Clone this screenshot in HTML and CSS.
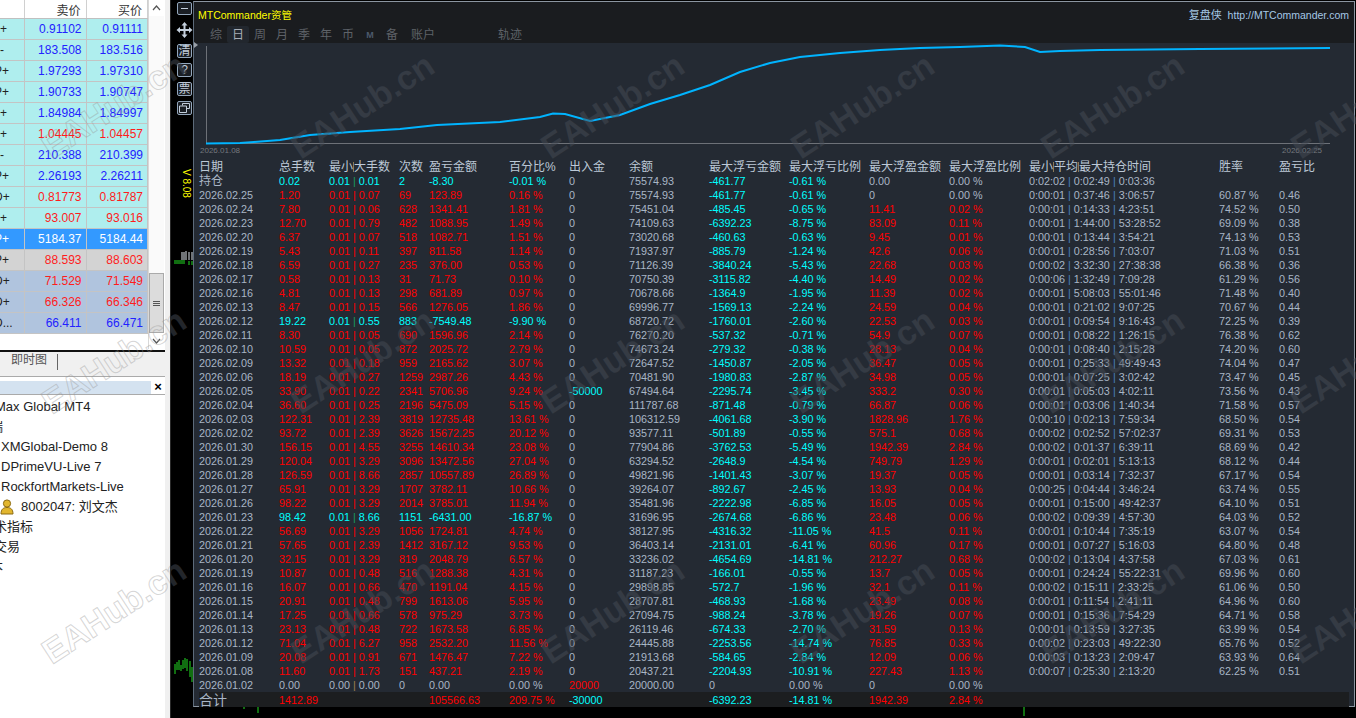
FILE: index.html
```html
<!DOCTYPE html>
<html>

<head>
  <meta charset="UTF-8">
  <title>MTCommander</title>
  <link rel="stylesheet" href="styles.css">
</head>

<body>
  <div id="left">
    <div class="watch">
      <table class="quotes">
        <tr class="qhead"><th></th><th>卖价</th><th>买价</th></tr>
        <tr class="qb"><td>+</td><td>0.91102</td><td>0.91111</td></tr>
        <tr class="qb"><td>-</td><td>183.508</td><td>183.516</td></tr>
        <tr class="qb"><td><span class="cut">P+</span></td><td>1.97293</td><td>1.97310</td></tr>
        <tr class="qb"><td><span class="cut">P+</span></td><td>1.90733</td><td>1.90747</td></tr>
        <tr class="qb"><td>+</td><td>1.84984</td><td>1.84997</td></tr>
        <tr class="qr"><td>+</td><td>1.04445</td><td>1.04457</td></tr>
        <tr class="qb"><td>-</td><td>210.388</td><td>210.399</td></tr>
        <tr class="qb"><td><span class="cut">P+</span></td><td>2.26193</td><td>2.26211</td></tr>
        <tr class="qr"><td><span class="cut">D+</span></td><td>0.81773</td><td>0.81787</td></tr>
        <tr class="qr"><td>+</td><td>93.007</td><td>93.016</td></tr>
        <tr class="qsel"><td><span class="cut">P+</span></td><td>5184.37</td><td>5184.44</td></tr>
        <tr class="qr qgrey"><td><span class="cut">P+</span></td><td>88.593</td><td>88.603</td></tr>
        <tr class="qr qsteel"><td><span class="cut">D+</span></td><td>71.529</td><td>71.549</td></tr>
        <tr class="qr qsteel"><td><span class="cut">D+</span></td><td>66.326</td><td>66.346</td></tr>
        <tr class="qb qsteel"><td><span class="cut">D...</span></td><td>66.411</td><td>66.471</td></tr>
      </table>
      <div class="scroll">
        <div class="arrow"><svg width="9" height="6" viewBox="0 0 9 6"><path d="M1 5l3.5-4L8 5" fill="none" stroke="#555" stroke-width="1.2"/></svg></div>
        <div class="track"></div>
        <div class="thumb"><span></span><span></span><span></span></div>
        <div class="arrow"><svg width="9" height="6" viewBox="0 0 9 6"><path d="M1 1l3.5 4L8 1" fill="none" stroke="#555" stroke-width="1.2"/></svg></div>
      </div>
    </div>
    <div class="tabbar"><span class="tabname">即时图</span><span class="tabsep"></span></div>
    <div class="navtitle"><div class="navfill"></div><span class="navclose">×</span></div>
    <div class="nav">
      <div class="item in2">Max Global MT4</div>
      <div class="item in10">端</div>
      <div class="item in1">XMGlobal-Demo 8</div>
      <div class="item in1">DPrimeVU-Live 7</div>
      <div class="item in1">RockfortMarkets-Live</div>
      <div class="item acct">
        <svg width="14" height="16" viewBox="0 0 14 16"><circle cx="7" cy="4.5" r="3.6" fill="#e2b62e" stroke="#8c6a10"/><path d="M1 15c0-5 2.500-6.500 6-6.500s6 1.500 6 6.500z" fill="#e2b62e" stroke="#8c6a10"/></svg>
        <span>8002047: 刘文杰</span>
      </div>
      <div class="item in5">技术指标</div>
      <div class="item in6">自动交易</div>
      <div class="item in8">脚本</div>
    </div>
    <div class="mark line m0 r0">EAHub.cn</div>
    <div class="mark line m0 r1">EAHub.cn</div>
    <div class="mark line m0 r2">EAHub.cn</div>
  </div>

  <div id="main">
    <svg class="bars" width="1186" height="718" viewBox="170 0 1186 718">
      <path d="M173 261h11M173 263h11M188 261v4M191 261v4M243 707v2M257 707v6M1023 707v9M1353 260v2" stroke="#22dd22" fill="none"/>
      <path d="M181 260v-8M183 260v-8M185 260v-9M188 260v-8M191 260v-8" stroke="#dfe6ee" fill="none"/>
      <path d="M174 664v10M176 662v8M178 660v10M180 665v6M182 660v9M184 658v10M186 659v12M189 661v16M191 667v15" stroke="#22dd22" fill="none"/>
    </svg>
    <div class="tools">
      <div class="tool minus"><span></span></div>
      <svg class="move" width="17" height="17" viewBox="0 0 17 17"><path d="M8.500 0l3 3.500h-2v3.500h3.500v-2l3.500 3-3.500 3v-2h-3.500v3.500h2l-3 3.500-3-3.500h2v-3.500h-3.500v2l-3.500-3 3.500-3v2h3.500v-3.500h-2z" fill="#c3cedb"/></svg>
      <div class="tool">清</div>
      <div class="tool">?</div>
      <div class="tool">票</div>
      <div class="tool"><svg width="11" height="10" viewBox="0 0 11 10"><path d="M3.500 2.500v-2h7v5h-2.500M.5 3h7v6.500h-7z" fill="none" stroke="#c3cedb"/></svg></div>
      <div class="version">V 8.08</div>
    </div>

    <div class="panel">
      <div class="titlebar">
        <span class="brand">MTCommander资管</span>
        <span class="site"><span class="hero">复盘侠</span> http://MTCommander.com</span>
      </div>
      <div class="tabs">
        <span class="tab">综</span><span class="tab on">日</span><span class="tab">周</span><span class="tab">月</span><span class="tab">季</span><span class="tab">年</span><span class="tab">币</span><span class="tab mm">M</span><span class="tab">备</span><span class="tab wide">账户</span><span class="tab track2">轨迹</span>
      </div>
      <span class="corner"></span>
      <div class="chart">
        <svg width="1160" height="117" viewBox="194 43 1160 117">
          <path d="M206.500 46v97.500H1330" fill="none" stroke="#6d7178"/>
          <polyline fill="none" stroke="#00b4ff" stroke-width="2" points="206,143.500 240,143 254,142 280,140 310,135 350,132 400,129 437,125 500,122 540,117 553,113.500 565,114 590,121 620,115 650,104 680,95 710,85 740,72 770,63 800,57 840,53 880,50 920,48 960,47 1000,45.500 1025,47 1040,52 1060,51 1100,50 1200,49 1330,48"/>
          <text class="axis" x="200" y="153">2026.01.08</text>
          <text class="axis" x="1282" y="153">2026.02.25</text>
        </svg>
      </div>

      <table class="report">
        <colgroup><col class="w80"><col class="w50"><col class="w70"><col class="w30"><col class="w80"><col class="w60"><col class="w60"><col class="w80"><col class="w80"><col class="w80"><col class="w80"><col class="w80"><col class="w190"><col class="w60"><col></colgroup>
        <tr class="head"><td>日期</td><td>总手数</td><td>最小<b class="tick"></b>大手数</td><td>次数</td><td>盈亏金额</td><td>百分比%</td><td>出入金</td><td>余额</td><td>最大浮亏金额</td><td>最大浮亏比例</td><td>最大浮盈金额</td><td>最大浮盈比例</td><td>最小<b class="tick"></b>平均<b class="tick"></b>最大持仓时间</td><td>胜率</td><td>盈亏比</td></tr>
        <tr class="loss flat"><td class="cn">持仓</td><td>0.02</td><td>0.01 <i>|</i> 0.01</td><td>2</td><td>-8.30</td><td>-0.01 %</td><td>0</td><td>75574.93</td><td>-461.77</td><td>-0.61 %</td><td>0.00</td><td>0.00 %</td><td>0:02:02 <i>|</i> 0:02:49 <i>|</i> 0:03:36</td><td></td><td></td></tr>
        <tr class="win flat"><td>2026.02.25</td><td>1.20</td><td>0.01 <i>|</i> 0.07</td><td>69</td><td>123.89</td><td>0.16 %</td><td>0</td><td>75574.93</td><td>-461.77</td><td>-0.61 %</td><td>0</td><td>0.00 %</td><td>0:00:01 <i>|</i> 0:37:46 <i>|</i> 3:06:57</td><td>60.87 %</td><td>0.46</td></tr>
        <tr class="win"><td>2026.02.24</td><td>7.80</td><td>0.01 <i>|</i> 0.06</td><td>628</td><td>1341.41</td><td>1.81 %</td><td>0</td><td>75451.04</td><td>-485.45</td><td>-0.65 %</td><td>11.41</td><td>0.02 %</td><td>0:00:01 <i>|</i> 0:14:33 <i>|</i> 4:23:51</td><td>74.52 %</td><td>0.50</td></tr>
        <tr class="win"><td>2026.02.23</td><td>12.70</td><td>0.01 <i>|</i> 0.79</td><td>482</td><td>1088.95</td><td>1.49 %</td><td>0</td><td>74109.63</td><td>-6392.23</td><td>-8.75 %</td><td>83.09</td><td>0.11 %</td><td>0:00:01 <i>|</i> 1:44:00 <i>|</i> 53:28:52</td><td>69.09 %</td><td>0.38</td></tr>
        <tr class="win"><td>2026.02.20</td><td>6.37</td><td>0.01 <i>|</i> 0.07</td><td>518</td><td>1082.71</td><td>1.51 %</td><td>0</td><td>73020.68</td><td>-460.63</td><td>-0.63 %</td><td>9.45</td><td>0.01 %</td><td>0:00:01 <i>|</i> 0:13:44 <i>|</i> 3:54:21</td><td>74.13 %</td><td>0.53</td></tr>
        <tr class="win"><td>2026.02.19</td><td>5.43</td><td>0.01 <i>|</i> 0.11</td><td>397</td><td>811.58</td><td>1.14 %</td><td>0</td><td>71937.97</td><td>-885.79</td><td>-1.24 %</td><td>42.6</td><td>0.06 %</td><td>0:00:01 <i>|</i> 0:28:56 <i>|</i> 7:03:07</td><td>71.03 %</td><td>0.51</td></tr>
        <tr class="win"><td>2026.02.18</td><td>6.59</td><td>0.01 <i>|</i> 0.27</td><td>235</td><td>376.00</td><td>0.53 %</td><td>0</td><td>71126.39</td><td>-3840.24</td><td>-5.43 %</td><td>22.68</td><td>0.03 %</td><td>0:00:02 <i>|</i> 3:32:30 <i>|</i> 27:38:38</td><td>66.38 %</td><td>0.36</td></tr>
        <tr class="win"><td>2026.02.17</td><td>0.58</td><td>0.01 <i>|</i> 0.13</td><td>31</td><td>71.73</td><td>0.10 %</td><td>0</td><td>70750.39</td><td>-3115.82</td><td>-4.40 %</td><td>14.49</td><td>0.02 %</td><td>0:00:06 <i>|</i> 1:32:49 <i>|</i> 7:09:28</td><td>61.29 %</td><td>0.56</td></tr>
        <tr class="win"><td>2026.02.16</td><td>4.81</td><td>0.01 <i>|</i> 0.13</td><td>298</td><td>681.89</td><td>0.97 %</td><td>0</td><td>70678.66</td><td>-1364.9</td><td>-1.95 %</td><td>11.39</td><td>0.02 %</td><td>0:00:01 <i>|</i> 5:08:03 <i>|</i> 55:01:46</td><td>71.48 %</td><td>0.40</td></tr>
        <tr class="win"><td>2026.02.13</td><td>8.47</td><td>0.01 <i>|</i> 0.15</td><td>566</td><td>1276.05</td><td>1.86 %</td><td>0</td><td>69996.77</td><td>-1569.13</td><td>-2.24 %</td><td>24.59</td><td>0.04 %</td><td>0:00:01 <i>|</i> 0:21:02 <i>|</i> 9:07:25</td><td>70.67 %</td><td>0.44</td></tr>
        <tr class="loss"><td>2026.02.12</td><td>19.22</td><td>0.01 <i>|</i> 0.55</td><td>883</td><td>-7549.48</td><td>-9.90 %</td><td>0</td><td>68720.72</td><td>-1760.01</td><td>-2.60 %</td><td>22.53</td><td>0.03 %</td><td>0:00:01 <i>|</i> 0:09:54 <i>|</i> 9:16:43</td><td>72.25 %</td><td>0.39</td></tr>
        <tr class="win"><td>2026.02.11</td><td>8.30</td><td>0.01 <i>|</i> 0.05</td><td>690</td><td>1596.96</td><td>2.14 %</td><td>0</td><td>76270.20</td><td>-537.32</td><td>-0.71 %</td><td>54.9</td><td>0.07 %</td><td>0:00:01 <i>|</i> 0:08:22 <i>|</i> 1:26:15</td><td>76.38 %</td><td>0.62</td></tr>
        <tr class="win"><td>2026.02.10</td><td>10.59</td><td>0.01 <i>|</i> 0.05</td><td>872</td><td>2025.72</td><td>2.79 %</td><td>0</td><td>74673.24</td><td>-279.32</td><td>-0.38 %</td><td>28.13</td><td>0.04 %</td><td>0:00:01 <i>|</i> 0:08:40 <i>|</i> 2:15:28</td><td>74.20 %</td><td>0.60</td></tr>
        <tr class="win"><td>2026.02.09</td><td>13.32</td><td>0.01 <i>|</i> 0.18</td><td>959</td><td>2165.62</td><td>3.07 %</td><td>0</td><td>72647.52</td><td>-1450.87</td><td>-2.05 %</td><td>36.47</td><td>0.05 %</td><td>0:00:01 <i>|</i> 0:25:33 <i>|</i> 49:49:43</td><td>74.04 %</td><td>0.47</td></tr>
        <tr class="win"><td>2026.02.06</td><td>18.19</td><td>0.01 <i>|</i> 0.27</td><td>1259</td><td>2987.26</td><td>4.43 %</td><td>0</td><td>70481.90</td><td>-1980.83</td><td>-2.87 %</td><td>34.98</td><td>0.05 %</td><td>0:00:01 <i>|</i> 0:07:25 <i>|</i> 3:02:42</td><td>73.47 %</td><td>0.45</td></tr>
        <tr class="win"><td>2026.02.05</td><td>33.90</td><td>0.01 <i>|</i> 0.22</td><td>2341</td><td>5706.96</td><td>9.24 %</td><td class="c">-50000</td><td>67494.64</td><td>-2295.74</td><td>-3.45 %</td><td>333.2</td><td>0.30 %</td><td>0:00:01 <i>|</i> 0:05:03 <i>|</i> 4:02:11</td><td>73.56 %</td><td>0.43</td></tr>
        <tr class="win"><td>2026.02.04</td><td>36.60</td><td>0.01 <i>|</i> 0.25</td><td>2196</td><td>5475.09</td><td>5.15 %</td><td>0</td><td>111787.68</td><td>-871.48</td><td>-0.79 %</td><td>66.87</td><td>0.06 %</td><td>0:00:01 <i>|</i> 0:03:06 <i>|</i> 1:40:34</td><td>71.58 %</td><td>0.57</td></tr>
        <tr class="win"><td>2026.02.03</td><td>122.31</td><td>0.01 <i>|</i> 2.39</td><td>3819</td><td>12735.48</td><td>13.61 %</td><td>0</td><td>106312.59</td><td>-4061.68</td><td>-3.90 %</td><td>1828.96</td><td>1.76 %</td><td>0:00:10 <i>|</i> 0:02:13 <i>|</i> 7:59:34</td><td>68.50 %</td><td>0.54</td></tr>
        <tr class="win"><td>2026.02.02</td><td>93.72</td><td>0.01 <i>|</i> 2.39</td><td>3626</td><td>15672.25</td><td>20.12 %</td><td>0</td><td>93577.11</td><td>-501.89</td><td>-0.55 %</td><td>575.1</td><td>0.68 %</td><td>0:00:02 <i>|</i> 0:02:52 <i>|</i> 57:02:37</td><td>69.31 %</td><td>0.53</td></tr>
        <tr class="win"><td>2026.01.30</td><td>156.15</td><td>0.01 <i>|</i> 4.55</td><td>3255</td><td>14610.34</td><td>23.08 %</td><td>0</td><td>77904.86</td><td>-3762.53</td><td>-5.49 %</td><td>1942.39</td><td>2.84 %</td><td>0:00:02 <i>|</i> 0:01:37 <i>|</i> 6:39:11</td><td>68.69 %</td><td>0.42</td></tr>
        <tr class="win"><td>2026.01.29</td><td>120.04</td><td>0.01 <i>|</i> 3.29</td><td>3096</td><td>13472.56</td><td>27.04 %</td><td>0</td><td>63294.52</td><td>-2648.9</td><td>-4.54 %</td><td>749.79</td><td>1.29 %</td><td>0:00:01 <i>|</i> 0:02:01 <i>|</i> 5:13:13</td><td>68.12 %</td><td>0.44</td></tr>
        <tr class="win"><td>2026.01.28</td><td>126.59</td><td>0.01 <i>|</i> 8.66</td><td>2857</td><td>10557.89</td><td>26.89 %</td><td>0</td><td>49821.96</td><td>-1401.43</td><td>-3.07 %</td><td>19.37</td><td>0.05 %</td><td>0:00:01 <i>|</i> 0:03:14 <i>|</i> 7:32:37</td><td>67.17 %</td><td>0.54</td></tr>
        <tr class="win"><td>2026.01.27</td><td>65.91</td><td>0.01 <i>|</i> 3.29</td><td>1707</td><td>3782.11</td><td>10.66 %</td><td>0</td><td>39264.07</td><td>-892.67</td><td>-2.45 %</td><td>13.93</td><td>0.04 %</td><td>0:00:25 <i>|</i> 0:04:44 <i>|</i> 3:46:24</td><td>63.74 %</td><td>0.55</td></tr>
        <tr class="win"><td>2026.01.26</td><td>98.22</td><td>0.01 <i>|</i> 3.29</td><td>2014</td><td>3785.01</td><td>11.94 %</td><td>0</td><td>35481.96</td><td>-2222.98</td><td>-6.85 %</td><td>16.05</td><td>0.05 %</td><td>0:00:01 <i>|</i> 0:15:00 <i>|</i> 49:42:37</td><td>64.10 %</td><td>0.51</td></tr>
        <tr class="loss"><td>2026.01.23</td><td>98.42</td><td>0.01 <i>|</i> 8.66</td><td>1151</td><td>-6431.00</td><td>-16.87 %</td><td>0</td><td>31696.95</td><td>-2674.68</td><td>-6.86 %</td><td>23.48</td><td>0.06 %</td><td>0:00:02 <i>|</i> 0:09:39 <i>|</i> 4:57:30</td><td>64.03 %</td><td>0.52</td></tr>
        <tr class="win"><td>2026.01.22</td><td>56.69</td><td>0.01 <i>|</i> 3.29</td><td>1056</td><td>1724.81</td><td>4.74 %</td><td>0</td><td>38127.95</td><td>-4316.32</td><td>-11.05 %</td><td>41.5</td><td>0.11 %</td><td>0:00:01 <i>|</i> 0:10:44 <i>|</i> 7:35:19</td><td>63.07 %</td><td>0.54</td></tr>
        <tr class="win"><td>2026.01.21</td><td>57.65</td><td>0.01 <i>|</i> 2.39</td><td>1412</td><td>3167.12</td><td>9.53 %</td><td>0</td><td>36403.14</td><td>-2131.01</td><td>-6.41 %</td><td>60.96</td><td>0.17 %</td><td>0:00:01 <i>|</i> 0:07:27 <i>|</i> 5:16:03</td><td>64.80 %</td><td>0.48</td></tr>
        <tr class="win"><td>2026.01.20</td><td>32.15</td><td>0.01 <i>|</i> 3.29</td><td>819</td><td>2048.79</td><td>6.57 %</td><td>0</td><td>33236.02</td><td>-4654.69</td><td>-14.81 %</td><td>212.27</td><td>0.68 %</td><td>0:00:02 <i>|</i> 0:13:04 <i>|</i> 4:37:58</td><td>67.03 %</td><td>0.61</td></tr>
        <tr class="win"><td>2026.01.19</td><td>10.87</td><td>0.01 <i>|</i> 0.48</td><td>516</td><td>1288.38</td><td>4.31 %</td><td>0</td><td>31187.23</td><td>-166.01</td><td>-0.55 %</td><td>13.7</td><td>0.05 %</td><td>0:00:01 <i>|</i> 0:24:24 <i>|</i> 55:22:31</td><td>69.96 %</td><td>0.60</td></tr>
        <tr class="win"><td>2026.01.16</td><td>16.07</td><td>0.01 <i>|</i> 0.66</td><td>470</td><td>1191.04</td><td>4.15 %</td><td>0</td><td>29898.85</td><td>-572.7</td><td>-1.96 %</td><td>32.1</td><td>0.11 %</td><td>0:00:02 <i>|</i> 0:15:11 <i>|</i> 2:33:25</td><td>61.06 %</td><td>0.50</td></tr>
        <tr class="win"><td>2026.01.15</td><td>20.91</td><td>0.01 <i>|</i> 0.48</td><td>799</td><td>1613.06</td><td>5.95 %</td><td>0</td><td>28707.81</td><td>-468.93</td><td>-1.68 %</td><td>23.49</td><td>0.08 %</td><td>0:00:01 <i>|</i> 0:11:54 <i>|</i> 2:41:11</td><td>64.96 %</td><td>0.60</td></tr>
        <tr class="win"><td>2026.01.14</td><td>17.25</td><td>0.01 <i>|</i> 0.66</td><td>578</td><td>975.29</td><td>3.73 %</td><td>0</td><td>27094.75</td><td>-988.24</td><td>-3.78 %</td><td>19.26</td><td>0.07 %</td><td>0:00:01 <i>|</i> 0:15:36 <i>|</i> 7:54:29</td><td>64.71 %</td><td>0.58</td></tr>
        <tr class="win"><td>2026.01.13</td><td>23.13</td><td>0.01 <i>|</i> 0.48</td><td>722</td><td>1673.58</td><td>6.85 %</td><td>0</td><td>26119.46</td><td>-674.33</td><td>-2.70 %</td><td>31.59</td><td>0.13 %</td><td>0:00:01 <i>|</i> 0:13:59 <i>|</i> 3:27:35</td><td>63.99 %</td><td>0.54</td></tr>
        <tr class="win"><td>2026.01.12</td><td>71.04</td><td>0.01 <i>|</i> 6.27</td><td>958</td><td>2532.20</td><td>11.56 %</td><td>0</td><td>24445.88</td><td>-2253.56</td><td>-14.74 %</td><td>76.85</td><td>0.33 %</td><td>0:00:02 <i>|</i> 0:23:03 <i>|</i> 49:22:30</td><td>65.76 %</td><td>0.52</td></tr>
        <tr class="win"><td>2026.01.09</td><td>20.08</td><td>0.01 <i>|</i> 0.91</td><td>671</td><td>1476.47</td><td>7.22 %</td><td>0</td><td>21913.68</td><td>-584.65</td><td>-2.84 %</td><td>12.09</td><td>0.06 %</td><td>0:00:03 <i>|</i> 0:13:23 <i>|</i> 2:09:47</td><td>63.93 %</td><td>0.64</td></tr>
        <tr class="win"><td>2026.01.08</td><td>11.60</td><td>0.01 <i>|</i> 1.73</td><td>151</td><td>437.21</td><td>2.19 %</td><td>0</td><td>20437.21</td><td>-2204.93</td><td>-10.91 %</td><td>227.43</td><td>1.13 %</td><td>0:00:07 <i>|</i> 0:25:30 <i>|</i> 2:13:20</td><td>62.25 %</td><td>0.51</td></tr>
        <tr class="zero"><td>2026.01.02</td><td>0.00</td><td>0.00 <i>|</i> 0.00</td><td>0</td><td>0.00</td><td>0.00 %</td><td class="r">20000</td><td>20000.00</td><td>0</td><td>0.00 %</td><td>0</td><td>0.00 %</td><td></td><td></td><td></td></tr>
        <tr class="total"><td class="cn">合计</td><td class="r">1412.89</td><td></td><td></td><td class="r">105566.63</td><td class="r">209.75 %</td><td class="c">-30000</td><td></td><td class="c">-6392.23</td><td class="c">-14.81 %</td><td class="r">1942.39</td><td class="r">2.84 %</td><td></td><td></td><td></td></tr>
      </table>
    </div>

    <div class="mark m0 r0">EAHub.cn</div><div class="mark m0 r1">EAHub.cn</div><div class="mark m0 r2">EAHub.cn</div>
    <div class="mark m1 r0">EAHub.cn</div><div class="mark m1 r1">EAHub.cn</div><div class="mark m1 r2">EAHub.cn</div>
    <div class="mark m2 r0">EAHub.cn</div><div class="mark m2 r1">EAHub.cn</div><div class="mark m2 r2">EAHub.cn</div>
    <div class="mark m3 r0">EAHub.cn</div><div class="mark m3 r1">EAHub.cn</div><div class="mark m3 r2">EAHub.cn</div>
    <div class="mark m4 r0">EAHub.cn</div><div class="mark m4 r1">EAHub.cn</div><div class="mark m4 r2">EAHub.cn</div>
    <div class="mark m5 r0">EAHub.cn</div><div class="mark m5 r1">EAHub.cn</div><div class="mark m5 r2">EAHub.cn</div>
  </div>
</body>

</html>
```

FILE: styles.css
```css
body,
html {
  padding: 0;
  margin: 0;
  height: 100%;
  overflow: hidden;
}

body {
  display: flex;
  background: #000;
  font-family: "Liberation Sans", "Noto Sans CJK SC", sans-serif;
}

/* left column: market watch + navigator */
#left {
  position: relative;
  width: 170px;
  height: 718px;
  flex: none;
  overflow: hidden;
  background: #f0f0f0;
}

.watch {
  display: flex;
  width: 165px;
  height: 350px;
  background: #fff;
}

.quotes {
  width: 148px;
  height: 334px;
  table-layout: fixed;
  border-collapse: collapse;
  font-size: 12px;
}

.quotes th {
  height: 18px;
  padding: 0 5px 0 0;
  background: #fff;
  border-right: 1px solid #d0d0d0;
  border-bottom: 1px solid #c0c0c0;
  color: #333;
  font-weight: normal;
  font-size: 12px;
  text-align: right;
}

.quotes th:first-child,
.quotes td:first-child {
  width: 24px;
  padding: 0;
  text-align: left;
  color: #222;
  overflow: hidden;
}

.quotes td {
  height: 20px;
  padding: 0 4px 0 0;
  border-right: 1px solid #c4c4c4;
  border-bottom: 1px solid #c4c4c4;
  background: #afeeee;
  text-align: right;
  white-space: nowrap;
}

.cut {
  display: block;
  margin-left: -6px;
}

.qb td {
  color: #2222ff;
}

.qr td {
  color: #ff1c1c;
}

.qgrey td {
  background: #d3d3d3;
}

.qsteel td {
  background: #b0c4de;
}

.qsel td,
.qsel td:first-child {
  background: #3399ff;
  color: #fff;
}

.scroll {
  display: flex;
  flex-direction: column;
  width: 15px;
  height: 349px;
  border-left: 1px solid #d8d8d8;
}

.arrow {
  display: flex;
  justify-content: center;
  align-items: center;
  height: 16px;
  background: #fff;
}

.track {
  flex: 1;
  background: #fafafa;
}

.thumb {
  display: flex;
  flex-direction: column;
  justify-content: center;
  gap: 1px;
  align-items: center;
  height: 60px;
  background: #dcdcdc;
  border: 1px solid #aaa;
  box-sizing: border-box;
}

.thumb span {
  width: 7px;
  height: 1px;
  background: #555;
}

.tabbar {
  display: flex;
  align-items: flex-start;
  width: 165px;
  height: 27px;
  border-top: 2px solid #111;
  border-bottom: 1px solid #aaa;
  box-sizing: border-box;
  background: #f0f0f0;
}

.tabname {
  margin-left: 11px;
  font-size: 12px;
  line-height: 16px;
  color: #555;
}

.tabsep {
  width: 1px;
  height: 16px;
  margin: 2px 0 0 10px;
  background: #666;
}

.navtitle {
  display: flex;
  align-items: center;
  width: 165px;
  height: 18px;
  padding-top: 3px;
  box-sizing: border-box;
  background: #fff;
  border-bottom: 1px solid #aaa;
}

.navfill {
  width: 151px;
  height: 13px;
  background: #d4e2f0;
}

.navclose {
  flex: 1;
  text-align: center;
  font-size: 13px;
  line-height: 12px;
  font-weight: bold;
  color: #000;
}

.nav {
  width: 165px;
  height: 324px;
  padding-top: 2px;
  box-sizing: border-box;
  background: #fff;
  font-size: 13px;
  color: #222;
}

.item {
  height: 20px;
  line-height: 20px;
  white-space: nowrap;
  overflow: hidden;
}

.in1 {
  padding-left: 1px;
}

.in2 {
  text-indent: -5px;
}

.in5 {
  text-indent: -19px;
}

.in6 {
  text-indent: -32px;
}

.in8 {
  text-indent: -23px;
}

.in10 {
  text-indent: -10px;
}

.acct {
  display: flex;
  align-items: center;
  gap: 7px;
}

/* right: black chart window with the panel on it */
#main {
  position: relative;
  flex: 1;
  display: flex;
  height: 718px;
  padding: 1px 1px 0 0;
  box-sizing: border-box;
  overflow: hidden;
  border-left: 1px solid #2a2a2a;
}

.bars {
  position: absolute;
  left: 0;
  top: 0;
}

.tools {
  position: relative;
  display: flex;
  flex-direction: column;
  align-items: flex-start;
  width: 22px;
  flex: none;
  padding: 1px 0 0 6px;
  box-sizing: border-box;
}

.tool {
  display: flex;
  justify-content: center;
  align-items: center;
  width: 15px;
  height: 14px;
  margin-bottom: 5px;
  border: 1px solid #93a6bb;
  border-radius: 2px;
  box-sizing: border-box;
  background: #1a1e24;
  color: #c3cedb;
  font-size: 12px;
  line-height: 12px;
}

.minus {
  height: 13px;
  margin-bottom: 7px;
}

.minus span {
  width: 7px;
  height: 1px;
  background: #c3cedb;
}

.move {
  margin: 0 0 5px -1px;
}

.version {
  margin: 49px 0 0 3px;
  writing-mode: vertical-rl;
  color: #ffff00;
  font-size: 10px;
  line-height: 12px;
}

.panel {
  position: relative;
  flex: 1;
  height: 706px;
  box-sizing: border-box;
  border: 1px solid #8b95a0;
  border-left-color: #5d6b7a;
  background: #242a33;
}

.titlebar {
  display: flex;
  justify-content: space-between;
  align-items: center;
  height: 24px;
  padding: 0 5px 0 4px;
  background: #1a1c1f;
  font-size: 10.5px;
}

.brand {
  color: #ffff00;
}

.site {
  color: #a5c8e6;
}

.hero {
  margin-right: 3px;
  font-size: 11px;
}

.tabs {
  display: flex;
  height: 17px;
  padding-left: 11px;
  background: #1a1c1f;
  font-size: 12px;
  line-height: 18px;
  color: #5e6268;
}

.tab {
  width: 22px;
  text-align: center;
}

.tab.on {
  background: #22272e;
  color: #a8aeb6;
  border-radius: 2px;
}

.tab.mm {
  font-size: 9px;
  font-weight: bold;
  color: #4c5a6c;
}

.tab.wide {
  width: 40px;
}

.tab.track2 {
  width: 40px;
  margin-left: 47px;
}

.corner {
  position: absolute;
  left: 0;
  top: 40px;
  border-left: 4px solid #9aa0a8;
  border-top: 3px solid transparent;
  border-bottom: 3px solid transparent;
}

.chart {
  height: 117px;
}

.chart svg {
  display: block;
}

.axis {
  fill: #74787e;
  font-size: 8px;
}

/* report table */
.report {
  width: 1150px;
  margin-left: 5px;
  table-layout: fixed;
  border-collapse: collapse;
  font-size: 10.8px;
  color: #a9b6c6;
}

.report td {
  height: 14px;
  padding: 0;
  line-height: 14px;
  white-space: nowrap;
}

.w30 { width: 30px; }
.w50 { width: 50px; }
.w60 { width: 60px; }
.w70 { width: 70px; }
.w80 { width: 80px; }
.w190 { width: 190px; }

.head td {
  font-size: 12px;
  color: #bcc8d6;
}

.tick {
  display: inline-block;
  width: 0;
  height: 10px;
  border-left: 1px solid #8a7a5a;
  vertical-align: -1px;
}

.report .cn {
  font-size: 12px;
}

.report i {
  font-style: normal;
  color: #4a80c0;
}

.report td:nth-child(3) i {
  color: inherit;
}

.loss td:nth-child(3) i {
  color: #1a9a60;
}

.zero td:nth-child(3) i {
  color: #a08050;
}

.win td:nth-child(n+2):nth-child(-n+6) {
  color: #f00;
}

.loss td:nth-child(n+2):nth-child(-n+6) {
  color: #00ffff;
}

.win td:nth-child(n+9):nth-child(-n+10),
.loss td:nth-child(n+9):nth-child(-n+10) {
  color: #00ffff;
}

.win td:nth-child(n+11):nth-child(-n+12),
.loss td:nth-child(n+11):nth-child(-n+12) {
  color: #f00;
}

.flat.flat td:nth-child(n+11):nth-child(-n+12) {
  color: #a9b6c6;
}

.report .r {
  color: #f00;
}

.report .c {
  color: #00ffff;
}

.report .total td {
  height: 13px;
  padding-top: 1px;
  background: #1c1e20;
}

.report .total .cn {
  font-size: 14px;
}

/* watermark */
.mark {
  position: absolute;
  font-size: 34px;
  font-weight: bold;
  line-height: 36px;
  white-space: nowrap;
  color: rgba(70, 76, 86, 0.5);
  transform: rotate(-33deg);
  transform-origin: left bottom;
  pointer-events: none;
}

.mark.line {
  color: transparent;
  -webkit-text-stroke: 1px rgba(150, 150, 150, 0.4);
}

.m0 { left: 55px; }
.m1 { left: 303px; }
.m2 { left: 553px; }
.m3 { left: 803px; }
.m4 { left: 1053px; }
.m5 { left: 1303px; }

.r0 { top: 129px; }
.r1 { top: 384px; }
.r2 { top: 634px; }

#main .m0 { left: -115px; }
#main .m1 { left: 133px; }
#main .m2 { left: 383px; }
#main .m3 { left: 633px; }
#main .m4 { left: 883px; }
#main .m5 { left: 1133px; }
```
